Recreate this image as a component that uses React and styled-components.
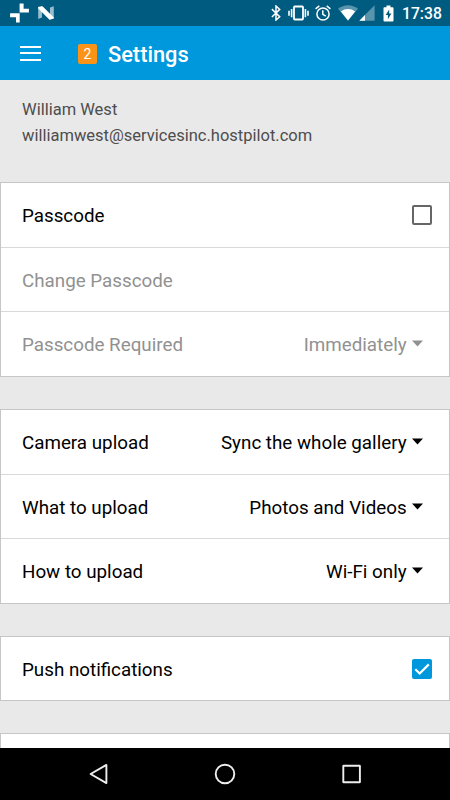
import React, { useState } from "react";
import styled, { createGlobalStyle } from "styled-components";

const uploadOptions = [
  { label: "Camera upload", value: "Sync the whole gallery" },
  { label: "What to upload", value: "Photos and Videos" },
  { label: "How to upload", value: "Wi-Fi only" },
];

const StatusBar = () => (
  <StatusWrapper>
    <StatusGroup>
      <Icon $w={20} $h={20} viewBox="0 0 20 20">
        <path d="M9.6 0.5h4v5.2h5.3v3.8H9.6zM0.1 10.2h9.6v9.3H6v-5.3H0.1z" />
      </Icon>
      <Icon $w={16} $h={14} $ml={8} viewBox="0 0 16 14">
        <path d="M0.2 1.1 4 0.2v11.3L0.2 12.9zM15.8 0.3v12L12 13.6V1.6z" opacity="0.6" />
        <path d="M0.2 1.1 4.5 0.2 15.8 11.6v0.8L11.5 13.8 0.2 2.5z" />
      </Icon>
    </StatusGroup>
    <StatusGroup>
      <Icon $w={10} $h={16} viewBox="0 0 10 16">
        <path
          d="M0.9 4.1 8.7 11.7 5 15V1l3.7 3.4L0.9 12"
          fill="none"
          stroke="#fff"
          strokeWidth="1.5"
        />
      </Icon>
      <Icon $w={21} $h={16} $ml={7} viewBox="0 0 21 16">
        <rect x="6" y="1.5" width="9" height="13" rx="0.8" fill="none" stroke="#fff" strokeWidth="1.8" />
        <path d="M0.2 5.7h1.6v5H0.2zM2.8 4h1.6v8.3H2.8zM16.6 4h1.6v8.3h-1.6zM19.2 5.7h1.6v5h-1.6z" />
      </Icon>
      <Icon $w={16} $h={16} $ml={6} viewBox="0 0 16 16">
        <g fill="none" stroke="#fff" strokeWidth="1.5">
          <circle cx="8" cy="9" r="6.1" />
          <path d="M7.8 5.2v4.1l3 1.8M0.6 3.8 4.3 0.8M15.4 3.8 11.7 0.8" />
        </g>
      </Icon>
      <Icon $w={20} $h={16} $ml={7} viewBox="0 0 20 16">
        <path d="M0 3.7C6-1 14-1 20 3.7L10 15.8z" opacity="0.35" />
        <path d="M2.9 6.5C7 3.2 13 3.2 17.1 6.5L10 15.5z" />
      </Icon>
      <Icon $w={16} $h={16} $ml={1} viewBox="0 0 16 16">
        <path d="M0.3 15.8 15.6 0.2v15.6z" opacity="0.35" />
        <path d="M0.3 15.8 6 10v5.8z" />
      </Icon>
      <Icon $w={11} $h={17} $ml={8} viewBox="0 0 11 17">
        <path
          fillRule="evenodd"
          d="M3.5 0.5h4v1.7H9.6q0.9 0 0.9 0.9v12.5q0 0.9-0.9 0.9H1.4q-0.9 0-0.9-0.9V3.1q0-0.9 0.9-0.9h2.1zM6.2 4.5 2.7 10h2.2v4.3L8.4 8.6H6.2z"
        />
      </Icon>
      <Clock>17:38</Clock>
    </StatusGroup>
  </StatusWrapper>
);

const Caret = () => (
  <CaretIcon viewBox="0 0 12 7">
    <path d="M0 0.5h11L5.5 6.5z" />
  </CaretIcon>
);

const Toggle = ({ label, checked, onChange }) => (
  <Row as="label">
    <span>{label}</span>
    <HiddenInput type="checkbox" checked={checked} onChange={onChange} />
    <Box $checked={checked}>
      {checked && (
        <svg width="20" height="20" viewBox="0 0 20 20">
          <path d="M3.3 10.2 7.7 14.5 16.8 5.4" fill="none" stroke="#fff" strokeWidth="2.2" />
        </svg>
      )}
    </Box>
  </Row>
);

const App = () => {
  const [passcode, setPasscode] = useState(false);
  const [push, setPush] = useState(true);

  return (
    <Screen>
      <GlobalStyle />
      <StatusBar />
      <Header>
        <MenuButton aria-label="Menu">
          <MenuLine />
          <MenuLine />
          <MenuLine />
        </MenuButton>
        <Badge>2</Badge>
        <Title>Settings</Title>
      </Header>
      <Content>
        <Account>
          <div>William West</div>
          <div>williamwest@servicesinc.hostpilot.com</div>
        </Account>
        <Group $height={195}>
          <Toggle
            label="Passcode"
            checked={passcode}
            onChange={() => setPasscode(!passcode)}
          />
          <Row $disabled={!passcode}>Change Passcode</Row>
          <Row $disabled={!passcode}>
            <span>Passcode Required</span>
            <Value>
              Immediately
              <Caret />
            </Value>
          </Row>
        </Group>
        <Group $height={195}>
          {uploadOptions.map(({ label, value }) => (
            <Row key={label}>
              <span>{label}</span>
              <Value>
                {value}
                <Caret />
              </Value>
            </Row>
          ))}
        </Group>
        <Group $height={65}>
          <Toggle
            label="Push notifications"
            checked={push}
            onChange={() => setPush(!push)}
          />
        </Group>
        <Group $height={65} />
      </Content>
      <NavBar>
        <NavIcon viewBox="0 0 22 22">
          <path d="M2.6 11 18.4 1.9v18.2z" />
        </NavIcon>
        <NavIcon viewBox="0 0 22 22">
          <circle cx="11" cy="11" r="9.3" />
        </NavIcon>
        <NavIcon viewBox="0 0 22 22">
          <rect x="3.3" y="2.7" width="16.6" height="16.6" rx="0.4" />
        </NavIcon>
      </NavBar>
    </Screen>
  );
};

const GlobalStyle = createGlobalStyle`
  * {
    box-sizing: border-box;
  }
  body {
    margin: 0;
    background: #e9e9e9;
    font-family: Roboto, sans-serif;
  }
`;
const Screen = styled.div`
  display: flex;
  flex-direction: column;
  height: 800px;
  overflow: hidden;
`;
const StatusWrapper = styled.div`
  display: flex;
  flex: none;
  justify-content: space-between;
  height: 26px;
  padding: 0 9px 0 10px;
  background: #005b81;
  color: #fff;
`;
const StatusGroup = styled.div`
  display: flex;
  align-items: center;
`;
const Icon = styled.svg`
  flex: none;
  width: ${({ $w }) => $w}px;
  height: ${({ $h }) => $h}px;
  margin-left: ${({ $ml }) => $ml || 0}px;
  fill: #fff;
`;
const Clock = styled.span`
  width: 39px;
  margin: 1px 0 0 8px;
  font-size: 15.7px;
  font-weight: 500;
  white-space: nowrap;
`;
const Header = styled.header`
  display: flex;
  flex: none;
  align-items: center;
  height: 54px;
  padding: 0 20px;
  background: #0098dd;
  color: #fff;
`;
const MenuButton = styled.button`
  display: flex;
  flex-direction: column;
  gap: 4.5px;
  width: 21px;
  padding: 0;
  border: 0;
  background: none;
`;
const MenuLine = styled.span`
  height: 2px;
  background: #fff;
`;
const Badge = styled.span`
  display: flex;
  align-items: center;
  justify-content: center;
  width: 19px;
  height: 20px;
  margin: 1px 0 0 37px;
  border-radius: 2px;
  background: #fb9318;
  font-size: 14px;
`;
const Title = styled.h1`
  margin: 3px 0 0 11px;
  font-size: 21.8px;
  font-weight: 500;
`;
const Content = styled.main`
  flex: 1;
  overflow: hidden;
`;
const Account = styled.section`
  height: 102px;
  padding: 17px 22px 0;
  color: #4d4d4d;
  font-size: 16.5px;
  line-height: 26px;
`;
const Group = styled.section`
  display: flex;
  flex-direction: column;
  height: ${({ $height }) => $height}px;
  margin-bottom: 32px;
  border: 1px solid #c6c6c6;
  background: #fff;
`;
const Row = styled.div`
  display: flex;
  flex: 1;
  align-items: center;
  justify-content: space-between;
  padding: 2px 17.4px 0 21px;
  color: ${({ $disabled }) => ($disabled ? "#919191" : "#000")};
  font-size: 18.8px;

  & + & {
    border-top: 1px solid #d9d9d9;
  }
`;
const Value = styled.span`
  display: flex;
  align-items: center;
  margin-right: 8px;
`;
const CaretIcon = styled.svg`
  width: 12px;
  height: 7px;
  margin: 0 0 3px 5px;
  fill: currentColor;
`;
const HiddenInput = styled.input`
  position: absolute;
  opacity: 0;
`;
const Box = styled.span`
  display: flex;
  width: 20px;
  height: 20px;
  margin-bottom: 2px;
  border: ${({ $checked }) => ($checked ? "0" : "2px solid #666")};
  border-radius: 2px;
  background: ${({ $checked }) => ($checked ? "#0098dd" : "#fff")};
`;
const NavBar = styled.nav`
  display: flex;
  flex: none;
  align-items: center;
  justify-content: space-between;
  height: 52px;
  padding: 0 88px;
  background: #000;
`;
const NavIcon = styled.svg`
  width: 22px;
  height: 22px;
  fill: none;
  stroke: #eee;
  stroke-width: 1.9;
  stroke-linejoin: round;
`;

export default App;
